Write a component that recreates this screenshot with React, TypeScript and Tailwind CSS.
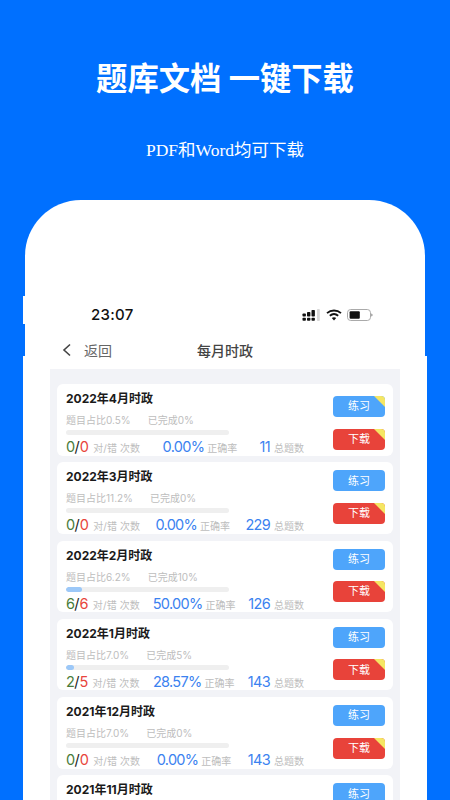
const cjk = '"Inter", "Noto Sans CJK SC", sans-serif'

const rows = [
  { title: '2022年4月时政', share: '0.5%', done: '0%', bar: 0, ok: 0, bad: 0, rate: '0.00%', total: 11, ribbon: true },
  { title: '2022年3月时政', share: '11.2%', done: '0%', bar: 0, ok: 0, bad: 0, rate: '0.00%', total: 229, ribbon: false },
  { title: '2022年2月时政', share: '6.2%', done: '10%', bar: 10, ok: 6, bad: 6, rate: '50.00%', total: 126, ribbon: false },
  { title: '2022年1月时政', share: '7.0%', done: '5%', bar: 5, ok: 2, bad: 5, rate: '28.57%', total: 143, ribbon: false },
  { title: '2021年12月时政', share: '7.0%', done: '0%', bar: 0, ok: 0, bad: 0, rate: '0.00%', total: 143, ribbon: false },
  { title: '2021年11月时政', share: '7.0%', done: '0%', bar: 0, ok: 0, bad: 0, rate: '0.00%', total: 143, ribbon: false },
]

function Ribbon() {
  return (
    <svg className="absolute right-0 top-0 h-[11px] w-[11px]" viewBox="0 0 11 11">
      <path d="M0 0H11V11Z" fill="#f5e663" />
    </svg>
  )
}

function Card({ row }: { row: (typeof rows)[number] }) {
  return (
    <div className="flex h-[71.5px] shrink-0 overflow-hidden rounded-[6px] bg-white pl-[9px] pr-[8px]">
      <div className="flex w-[238px] flex-col">
        <div className="mt-[7px] h-[16px] shrink-0 text-[12px] font-bold leading-[16px] text-[#1a1a1a]">{row.title}</div>
        <div className="mt-[6px] flex h-[14px] shrink-0 gap-[17px] text-[10px] leading-[14px] text-[#bdbdbd]">
          <span>题目占比{row.share}</span>
          <span>已完成{row.done}</span>
        </div>
        <div className="mt-[3px] h-[5px] w-[163px] shrink-0 overflow-hidden rounded-full bg-[#efefef]">
          <div className="h-full rounded-full bg-[#9cc8f8]" style={{ width: `${row.bar}%` }} />
        </div>
        <div className="mt-[3px] flex shrink-0 items-baseline justify-between leading-[18px]">
          <div className="flex items-baseline">
            <span className="text-[14.5px] tracking-[-0.7px] text-[#4a7c3a]">{row.ok}</span>
            <span className="text-[14.5px] text-[#222]">/</span>
            <span className="text-[14.5px] tracking-[-0.7px] text-[#e8453c]">{row.bad}</span>
            <span className="ml-[5px] text-[10px] tracking-[0.1px] text-[#bdbdbd]">对/错 次数</span>
          </div>
          <div className="flex items-baseline">
            <span className="text-[14.5px] tracking-[-0.7px] text-[#3b82f0]">{row.rate}</span>
            <span className="ml-[3px] text-[10px] text-[#bdbdbd]">正确率</span>
          </div>
          <div className="flex items-baseline">
            <span className="text-[14.5px] tracking-[-0.7px] text-[#3b82f0]">{row.total}</span>
            <span className="ml-[4px] text-[10px] text-[#bdbdbd]">总题数</span>
          </div>
        </div>
      </div>
      <div className={row.ribbon ? 'ml-auto flex w-[52px] flex-col gap-[12px] pt-[12px]' : 'ml-auto flex w-[52px] flex-col gap-[11.5px] pt-[8px]'}>
        <div className="relative flex h-[21px] items-center justify-center overflow-hidden rounded-[4px] bg-[#4ea5fb] text-[11px] text-white">
          练习
          {row.ribbon && <Ribbon />}
        </div>
        <div className="relative flex h-[21px] items-center justify-center overflow-hidden rounded-[4px] bg-[#e8433a] text-[11px] text-white">
          下载
          <Ribbon />
        </div>
      </div>
    </div>
  )
}

function StatusIcons() {
  return (
    <div className="flex items-center gap-[5px]">
      <svg width="19" height="12" viewBox="0 0 19 12" fill="#111">
        <rect x="0.5" y="4.5" width="3.4" height="3" rx="0.8" />
        <rect x="0.5" y="8.8" width="3.4" height="3" rx="0.8" />
        <rect x="5" y="3" width="3.4" height="4.5" rx="0.8" />
        <rect x="5" y="8.8" width="3.4" height="3" rx="0.8" />
        <rect x="9.5" y="1" width="3.4" height="6.5" rx="0.8" />
        <rect x="9.5" y="8.8" width="3.4" height="3" rx="0.8" />
        <rect x="15" y="0" width="2.8" height="12" rx="0.8" fill="#d8d8d8" />
      </svg>
      <svg width="16" height="12" viewBox="0 0 16 12" fill="none" stroke="#111" strokeWidth="1.8">
        <path d="M1 4.2C5 0.6 11 0.6 15 4.2" />
        <path d="M3.8 6.8C6.4 4.6 9.6 4.6 12.2 6.8" />
        <path d="M8 11.5L5.8 9C7 8 9 8 10.2 9Z" fill="#111" stroke="none" />
      </svg>
      <svg width="26" height="12" viewBox="0 0 26 12">
        <rect x="0.5" y="0.5" width="23" height="11" rx="3.2" fill="#fff" stroke="#aaa" />
        <rect x="2.6" y="2.2" width="10.2" height="7.6" rx="1" fill="#111" />
        <path d="M24.2 4.5C25 4.8 25.6 5.3 25.6 6C25.6 6.7 25 7.2 24.2 7.5Z" fill="#999" />
      </svg>
    </div>
  )
}

export default function App() {
  return (
    <div
      className="flex h-[800px] w-[450px] flex-col items-center overflow-hidden bg-[#0070ff]"
      style={{ fontFamily: cjk }}
    >
      <h1 className="mt-[58px] text-[31.3px] font-bold leading-[42px] text-white">题库文档 一键下载</h1>
      <p
        className="mt-[37px] text-[17.5px] leading-[26px] text-white"
        style={{ fontFamily: '"Liberation Serif", "Noto Sans CJK SC", serif' }}
      >
        PDF和Word均可下载
      </p>

      <div className="relative mt-[37px] flex w-[400px] flex-1 flex-col rounded-t-[56px] bg-white">
        {/* side buttons of the phone */}
        <div className="absolute -left-[2px] top-[96px] h-[28px] w-[2px] bg-white" />
        <div className="absolute -left-[2px] top-[156px] bottom-0 w-[2px] bg-white" />
        <div className="absolute -right-[2px] top-[156px] bottom-0 w-[2px] bg-white" />

        <div className="mt-[104px] flex h-[22px] items-center justify-between pl-[66px] pr-[52px]">
          <span className="text-[15px] font-medium tracking-[0.3px] text-[#111]">23:07</span>
          <StatusIcons />
        </div>

        <div className="mt-[12px] flex h-[24px] items-center pl-[37px]">
          <svg width="10" height="14" viewBox="0 0 10 14" fill="none" stroke="#444" strokeWidth="1.6">
            <path d="M8 1.5L2 7L8 12.5" />
          </svg>
          <span className="ml-[12px] text-[14px] text-[#666]">返回</span>
          <span className="ml-[85px] text-[14px] font-medium text-[#444]">每月时政</span>
        </div>

        <div className="mx-[25px] mt-[7px] flex flex-1 flex-col gap-[6.8px] overflow-hidden bg-[#f2f3f7] px-[7px] pt-[15px]">
          {rows.map((row) => (
            <Card key={row.title} row={row} />
          ))}
        </div>
      </div>
    </div>
  )
}
